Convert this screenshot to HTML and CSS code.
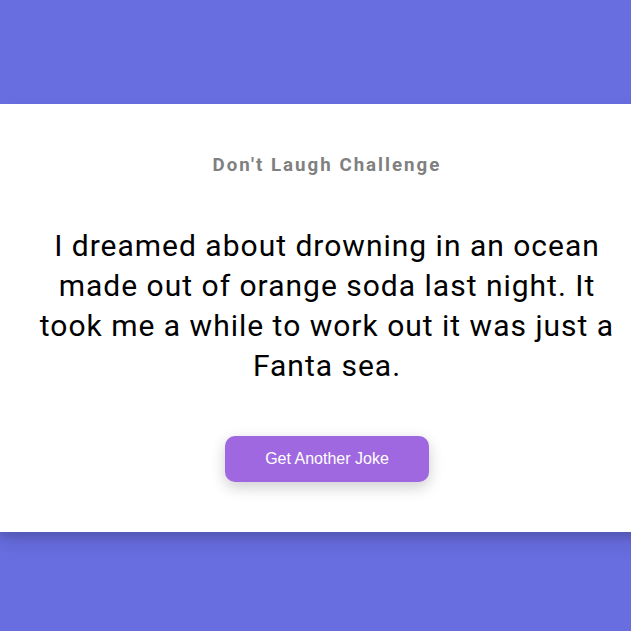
FILE: index.html
```html
<!DOCTYPE html>
<html lang="en">
<head>
<meta charset="UTF-8">
<title>Don't Laugh Challenge</title>
<link rel="stylesheet" href="styles.css">
</head>
<body>
  <div class="container">
    <h3 class="title">Don't Laugh Challenge</h3>
    <div class="joke">I dreamed about drowning in an ocean made out of orange soda last night. It took me a while to work out it was just a Fanta sea.</div>
    <button class="btn">Get Another Joke</button>
  </div>
</body>
</html>
```
FILE: styles.css
```css
* { box-sizing: border-box; }
body {
  margin: 0;
  padding: 22px 0 18px;
  height: 100vh;
  background: #686de0;
  font-family: Roboto, "Noto Sans", sans-serif;
  display: flex;
  flex-direction: column;
  align-items: flex-start;
  justify-content: center;
  overflow: hidden;
}
.container {
  box-sizing: content-box;
  flex-shrink: 0;
  background: #fff;
  box-shadow: 0 10px 20px rgba(0,0,0,0.1), 0 6px 6px rgba(0,0,0,0.1);
  padding: 50px 20px;
  text-align: center;
  width: 614px;
}
.title {
  margin: 0;
  font-size: 18.72px;
  font-weight: 700;
  color: #808080;
  letter-spacing: 2px;
}
.joke {
  font-size: 30px;
  letter-spacing: 1px;
  line-height: 40px;
  margin: 50px auto;
  max-width: 600px;
  color: #000;
}
.btn {
  background: #9f68e0;
  color: #fff;
  border: 0;
  border-radius: 10px;
  box-shadow: 0 5px 15px rgba(0,0,0,0.2);
  padding: 14px 40px;
  font-family: "Liberation Sans", Arial, sans-serif;
  font-size: 16px;
  cursor: pointer;
}
```
